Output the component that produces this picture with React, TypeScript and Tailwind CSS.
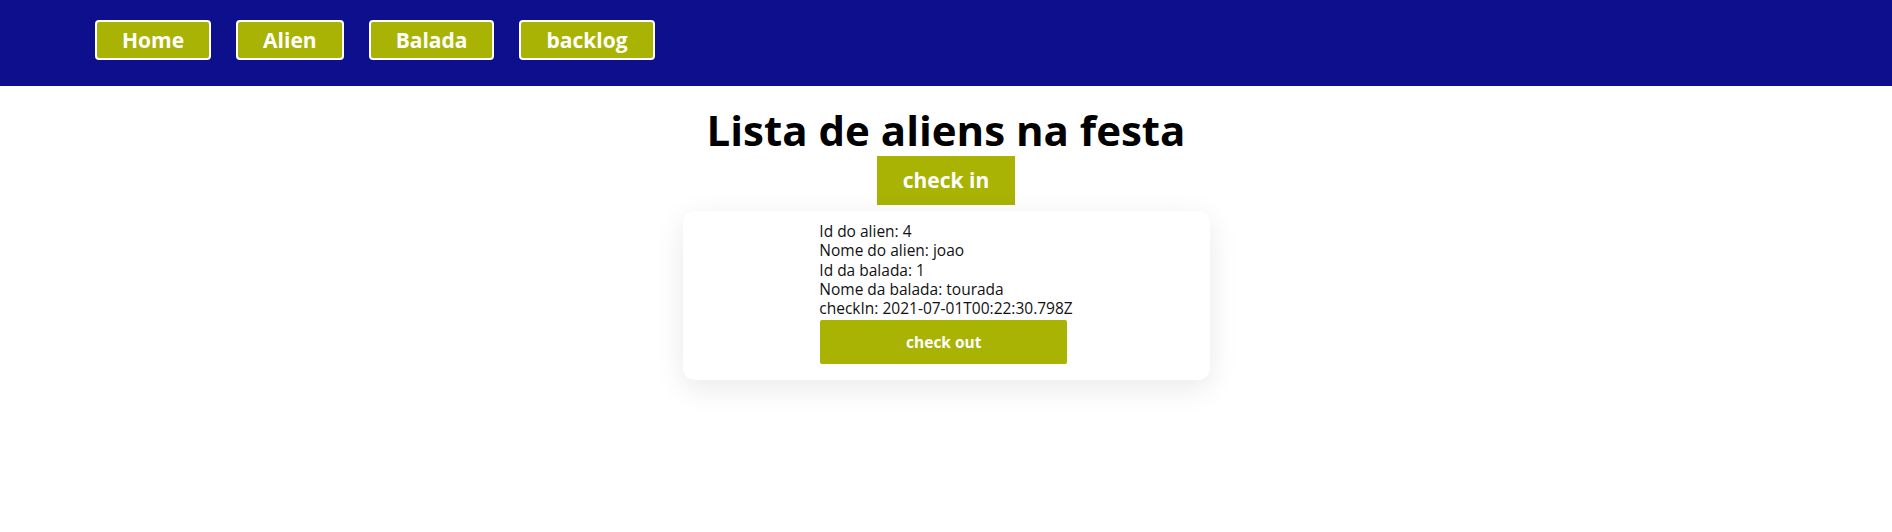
const navItems = ['Home', 'Alien', 'Balada', 'backlog']

const checkIns = [
  {
    alienId: 4,
    alienName: 'joao',
    baladaId: 1,
    baladaName: 'tourada',
    checkIn: '2021-07-01T00:22:30.798Z',
  },
]

export default function App() {
  return (
    <div className="min-h-[532px] bg-white font-['Open_Sans',sans-serif] text-black">
      <nav className="flex h-[86px] items-start gap-[25px] bg-[#0e0f8c] pl-[95px] pt-[20px]">
        {navItems.map((item) => (
          <button
            key={item}
            className="h-[40px] rounded-[4px] border-2 border-white bg-[#a8b304] px-[25px] text-[21px] font-bold leading-none text-white"
          >
            {item}
          </button>
        ))}
      </nav>

      <main className="flex flex-col items-center">
        <h1 className="mt-[18px] text-[42px] font-bold leading-[52px]">Lista de aliens na festa</h1>
        <button className="h-[49px] w-[138px] bg-[#a8b304] text-[21px] font-bold text-white">
          check in
        </button>

        {checkIns.map((c) => (
          <div
            key={c.alienId}
            className="mt-[6px] flex w-[527px] justify-center rounded-[12px] bg-white pb-[16px] pt-[11px] shadow-[0_8px_30px_rgba(0,0,0,0.09)]"
          >
            <div className="flex flex-col items-start text-[15.5px] leading-[19.3px] text-[#111]">
              <p>Id do alien: {c.alienId}</p>
              <p>Nome do alien: {c.alienName}</p>
              <p>Id da balada: {c.baladaId}</p>
              <p>Nome da balada: {c.baladaName}</p>
              <p>checkIn: {c.checkIn}</p>
              <button className="ml-[1px] mt-[2px] h-[44px] w-[247px] rounded-[2px] bg-[#a8b304] text-[15.5px] font-bold text-white">
                check out
              </button>
            </div>
          </div>
        ))}
      </main>
    </div>
  )
}
